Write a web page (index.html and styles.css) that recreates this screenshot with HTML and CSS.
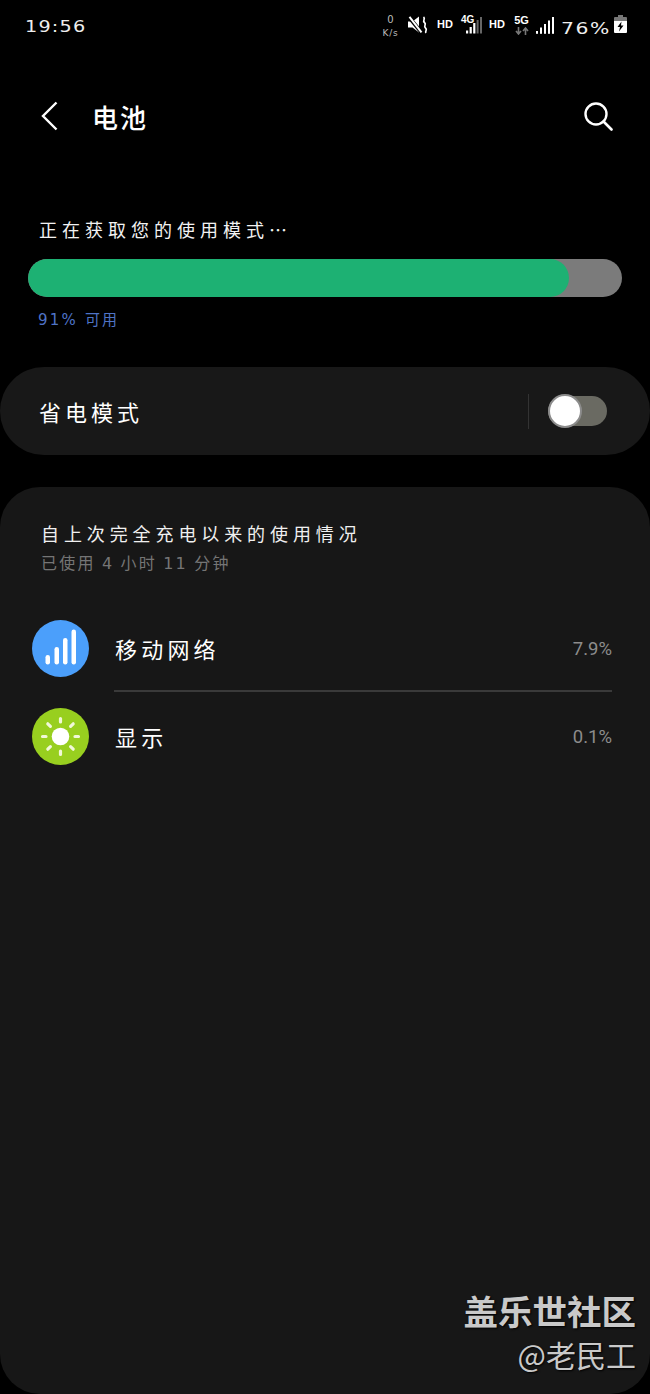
FILE: index.html
```html
<!DOCTYPE html>
<html lang="zh-CN">
<head>
<meta charset="utf-8">
<title>电池</title>
<link rel="stylesheet" href="styles.css">
</head>
<body>
<header class="status">
  <span class="clock">19:56</span>
  <div class="status-icons">
    <div class="speed"><span class="speed-num">0</span><span class="speed-unit">K/s</span></div>
    <svg class="ic-mute" width="20" height="18" viewBox="0 0 20 18"><path d="M0 5.500h4.500L11 0.500v16l-6.500-5H0z" fill="#fff"/><path d="M0.500 0.500l13 16" stroke="#000" stroke-width="3.800"/><path d="M1.500 0.800l12 15.500" stroke="#fff" stroke-width="2"/><path d="M15.500 1c2.500 2-1.500 3.500 1 5.500s-1.500 3.500 1 5.500-1 3 .5 5" fill="none" stroke="#fff" stroke-width="1.700"/></svg>
    <span class="hd hd-a">HD</span>
    <div class="net net-4g">
      <span class="net-label">4G</span>
      <svg class="bars-small" width="16" height="17" viewBox="0 0 16 17"><rect x="0" y="13.500" width="2.200" height="3" fill="#fff"/><rect x="3.600" y="10" width="2.200" height="6.500" fill="#fff"/><rect x="7.200" y="6" width="2.200" height="10.500" fill="#fff"/><rect x="10.600" y="3" width="2" height="13.500" fill="#666"/><rect x="14" y="0" width="2" height="16.500" fill="#666"/></svg>
    </div>
    <span class="hd hd-b">HD</span>
    <div class="net-5g">
      <span class="net-label">5G</span>
      <svg width="14" height="8" viewBox="0 0 14 8"><path d="M3.500 0v6M1 4l2.500 3L6 4" fill="none" stroke="#777" stroke-width="1.600"/><path d="M10.500 8V1.500M8 4l2.500-3L13 4" fill="none" stroke="#777" stroke-width="1.600"/></svg>
    </div>
    <svg class="bars" width="18" height="17" viewBox="0 0 18 17"><rect x="0" y="14" width="2" height="2.800" fill="#fff"/><rect x="4" y="10.500" width="2" height="6.300" fill="#fff"/><rect x="8" y="7" width="2" height="9.800" fill="#fff"/><rect x="12" y="3.500" width="2" height="13.300" fill="#fff"/><rect x="16" y="0" width="2" height="16.800" fill="#fff"/></svg>
    <span class="pct-box"><span class="pct">76%</span></span>
    <svg class="batt" width="13" height="18" viewBox="0 0 13 18"><path d="M4 0h5v2h3a1 1 0 0 1 1 1v3H0V3a1 1 0 0 1 1-1h3z" fill="#777"/><path d="M0 6h13v11a1 1 0 0 1-1 1H1a1 1 0 0 1-1-1z" fill="#fff"/><path d="M7.500 6.500L3.500 12h2.500l-1 4.500L9.500 10.500H7z" fill="#000"/></svg>
  </div>
</header>

<nav class="appbar">
  <svg class="back" width="17" height="30" viewBox="0 0 17 30"><path d="M15.500 1.500L2 15l13.500 13.500" fill="none" stroke="#fff" stroke-width="2.400"/></svg>
  <h1 class="title">电池</h1>
  <svg class="search" width="29" height="29" viewBox="0 0 29 29"><circle cx="12" cy="12" r="10.500" fill="none" stroke="#fff" stroke-width="2.400"/><path d="M19.500 19.500L27.500 27.500" stroke="#fff" stroke-width="2.600" stroke-linecap="round"/></svg>
</nav>

<section class="charge">
  <p class="charge-head">正在获取您的使用模式…</p>
  <div class="meter"><div class="meter-fill"></div></div>
  <p class="charge-label">91% 可用</p>
</section>

<section class="saver">
  <span class="saver-label">省电模式</span>
  <span class="saver-sep"></span>
  <span class="toggle"><span class="toggle-knob"></span></span>
</section>

<section class="usage">
  <h2 class="usage-title">自上次完全充电以来的使用情况</h2>
  <p class="usage-sub">已使用 4 小时 11 分钟</p>
  <ul class="usage-list">
    <li class="row">
      <svg class="row-icon" width="57" height="57" viewBox="0 0 57 57"><circle cx="28.500" cy="28.500" r="28.500" fill="#4b9ffb"/><g fill="#fff"><rect x="13.500" y="35" width="4.500" height="9.500" rx="2.200"/><rect x="22.500" y="27" width="4.500" height="17.500" rx="2.200"/><rect x="31" y="18" width="4.500" height="26.500" rx="2.200"/><rect x="39.500" y="9.500" width="4.500" height="35" rx="2.200"/></g></svg>
      <div class="row-body row-body-line"><span class="row-name">移动网络</span><span class="row-val">7.9%</span></div>
    </li>
    <li class="row">
      <svg class="row-icon" width="57" height="57" viewBox="0 0 57 57"><circle cx="28.500" cy="28.500" r="28.500" fill="#98cf1f"/><circle cx="28.500" cy="28.500" r="8.800" fill="#fff"/><g stroke="#f1f8d8" stroke-width="3.200" stroke-linecap="round"><path d="M28.500 10.500v3.500M28.500 43v3.500M10.500 28.500h3.500M43 28.500h3.500M15.800 15.800l2.600 2.500M38.600 38.700l2.600 2.500M41.200 15.800l-2.600 2.500M18.400 38.700l-2.600 2.500"/></g></svg>
      <div class="row-body"><span class="row-name">显示</span><span class="row-val">0.1%</span></div>
    </li>
  </ul>
</section>

<aside class="mark">
  <span class="mark-main">盖乐世社区</span>
  <span class="mark-sub">@老民工</span>
</aside>
</body>
</html>
```

FILE: styles.css
```css
* { box-sizing: border-box; }
html, body { margin: 0; padding: 0; }
body {
  position: relative;
  width: 650px;
  height: 1394px;
  overflow: hidden;
  display: flex;
  flex-direction: column;
  background: #000;
  color: #fff;
  font-family: "Noto Sans CJK SC", "Noto Sans", sans-serif;
}
p, h1, h2, ul { margin: 0; padding: 0; font-weight: 400; }
ul { list-style: none; }

.status {
  height: 48px;
  padding: 8px 23px 0 25px;
  display: flex;
  justify-content: space-between;
  align-items: flex-start;
  flex: none;
}
.clock {
  display: inline-block;
  font: 16px/24px "DejaVu Sans", sans-serif;
  letter-spacing: 1px;
  color: #eee;
  margin-top: 7px;
  transform: scaleX(1.2);
  transform-origin: left center;
}
.status-icons {
  display: flex;
  align-items: flex-start;
  font-family: "Liberation Sans", sans-serif;
  font-weight: 700;
}
.speed {
  width: 17px;
  margin-top: 7px;
  display: flex;
  flex-direction: column;
  align-items: center;
  color: #bbb;
}
.speed-num { font: 400 10px/10px "DejaVu Sans", sans-serif; }
.speed-unit {
  font: 400 9px/11px "DejaVu Sans", sans-serif;
  letter-spacing: 0.800px;
  margin-top: 3px;
  white-space: nowrap;
  color: #bbb;
}
.ic-mute { margin: 8px 0 0 9px; }
.hd { font-size: 11px; line-height: 13px; margin-top: 10px; width: 17px; }
.hd-a { margin-left: 9px; }
.hd-b { margin-left: 7px; }
.net-4g { position: relative; width: 21px; height: 26px; margin: 7px 0 0 7px; }
.net-4g .net-label { position: absolute; left: 0; top: 0; }
.net-4g .bars-small { position: absolute; left: 5px; top: 2px; }
.net-label { font-size: 10px; line-height: 10px; display: block; }
.net-5g {
  width: 15px;
  margin: 7px 0 0 8px;
  display: flex;
  flex-direction: column;
  align-items: center;
  gap: 2px;
}
.net-5g .net-label { font-size: 11px; }
.bars { margin: 9px 0 0 7px; }
.pct-box { width: 49px; margin: 12px 0 0 7px; }
.pct {
  display: inline-block;
  font: 400 16px/16px "DejaVu Sans", sans-serif;
  letter-spacing: 1.200px;
  color: #eee;
  transform: scaleX(1.27);
  transform-origin: left center;
}
.batt { margin: 7px 0 0 4px; }

.appbar {
  flex: none;
  height: 36px;
  margin-top: 50px;
  padding: 0 37px 0 41px;
  display: flex;
  align-items: center;
}
.title {
  font-size: 26px;
  line-height: 36px;
  font-weight: 500;
  letter-spacing: 2px;
  margin: 2px 0 0 34px;
  flex: 1;
}

.charge { flex: none; margin-top: 83px; padding: 0 28px; }
.charge-head {
  font-size: 18px;
  line-height: 24px;
  letter-spacing: 5px;
  padding-left: 11px;
  color: #f2f2f2;
}
.meter {
  height: 38px;
  margin-top: 18px;
  border-radius: 19px;
  background: #7b7b7b;
  overflow: hidden;
}
.meter-fill {
  width: 91%;
  height: 100%;
  border-radius: 19px;
  background: #1db173;
}
.charge-label {
  font: 400 15px/20px "DejaVu Sans", "Noto Sans CJK SC", sans-serif;
  letter-spacing: 2.200px;
  margin-top: 13px;
  padding-left: 10px;
  color: #4f73c6;
}

.saver {
  flex: none;
  height: 88px;
  margin-top: 37px;
  padding: 0 43px 0 39px;
  border-radius: 44px;
  background: #181818;
  display: flex;
  align-items: center;
}
.saver-label {
  flex: 1;
  font-size: 22px;
  line-height: 30px;
  letter-spacing: 4px;
}
.saver-sep { width: 1px; height: 35px; background: #333; margin-right: 19px; }
.toggle {
  position: relative;
  width: 59px;
  height: 30px;
  border-radius: 15px;
  background: #6a6a62;
}
.toggle-knob {
  position: absolute;
  left: 0;
  top: -2px;
  width: 34px;
  height: 34px;
  border-radius: 50%;
  background: #fff;
  border: 2px solid #8c8c8c;
}

.usage {
  flex: 1;
  margin-top: 32px;
  padding-top: 34px;
  border-radius: 40px;
  background: #171717;
}
.usage-title {
  font-size: 18px;
  line-height: 24px;
  letter-spacing: 4.900px;
  padding-left: 41px;
  color: #f0f0f0;
}
.usage-sub {
  font: 400 16px/22px "DejaVu Sans", "Noto Sans CJK SC", sans-serif;
  letter-spacing: 2.200px;
  word-spacing: -1px;
  margin-top: 8px;
  padding-left: 41px;
  color: #757575;
}
.usage-list { margin-top: 29px; padding: 0 38px 0 32px; }
.row { display: flex; align-items: center; height: 88px; }
.row-icon { flex: none; }
.row-body {
  flex: 1;
  height: 88px;
  margin-left: 25px;
  padding-top: 1px;
  display: flex;
  align-items: center;
  justify-content: space-between;
  border-bottom: 2px solid transparent;
}
.row-body-line { border-bottom-color: #3a3a3a; }
.row-name {
  font-size: 22px;
  line-height: 30px;
  letter-spacing: 4.200px;
  padding-left: 1px;
}
.row-val {
  font: 400 18.500px/24px Roboto, sans-serif;
  color: #8c8c8c;
  margin-top: 2px;
}

.mark {
  position: absolute;
  right: 14px;
  bottom: 19px;
  display: flex;
  flex-direction: column;
  align-items: flex-end;
  color: #c9c9c9;
  text-shadow: 1px 1px 2px #000;
}
.mark-main { font-size: 34.500px; line-height: 44px; font-weight: 700; margin-bottom: 1px; }
.mark-sub { font-size: 30px; line-height: 42px; }
```
